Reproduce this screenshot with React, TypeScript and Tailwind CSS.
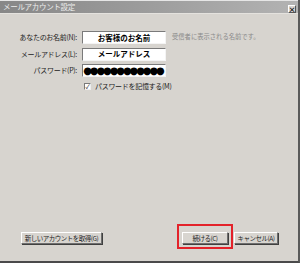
const jp = "font-['Noto_Sans_CJK_JP',sans-serif]";

function Field({ label, children, hint }: { label: string; children: React.ReactNode; hint?: string }) {
  return (
    <div className="flex items-center h-[13px]">
      <div className="w-[77px] text-right text-[7px] leading-none text-[#222] tracking-[-0.3px]">{label}</div>
      <div className="ml-[5px] w-[84px] h-[13px] bg-white border border-t-[#7a7a7a] border-l-[#7a7a7a] border-r-[#f4f4f4] border-b-[#f4f4f4] flex items-center justify-center text-[7.5px] font-bold leading-none text-black overflow-hidden">
        {children}
      </div>
      {hint && <div className="ml-[6px] text-[6.3px] leading-none text-[#8a8a8a] whitespace-nowrap">{hint}</div>}
    </div>
  );
}

function Btn({ label, w }: { label: string; w: string }) {
  return (
    <button
      className={`${w} h-[12px] bg-[#d8d5d0] border border-t-white border-l-white border-r-[#6e6e6e] border-b-[#6e6e6e] shadow-[1px_1px_0_#404040] text-[6.5px] leading-none text-[#222] tracking-[-0.5px] flex items-center justify-center whitespace-nowrap`}
    >
      {label}
    </button>
  );
}

export default function App() {
  return (
    <div className={`${jp} w-[300px] h-[263px] bg-[#d7d4cf] flex flex-col border-r-2 border-b-2 border-r-[#5a5a5a] border-b-[#4a4a4a] overflow-hidden`}>
      <div className="h-[1px] bg-[#e6e6e6]" />
      <div className="h-[12px] bg-gradient-to-r from-[#878787] to-[#b3b3b3] flex items-center justify-between pl-[3px] pr-[2px]">
        <span className="text-[7.5px] leading-none text-[#ececec] tracking-[-0.3px]">メールアカウント設定</span>
        <span className="w-[8px] h-[8px] mt-[4px] bg-[#d8d5d0] border border-t-white border-l-white border-r-[#555] border-b-[#555] flex items-center justify-center text-[7px] leading-none font-bold text-black">×</span>
      </div>
      <div className="h-[1px] bg-[#e4e2de]" />
      <div className="flex-1 flex flex-col pt-[17px]">
        <div className="flex flex-col gap-[3.5px]">
          <Field label="あなたのお名前(N):" hint="受信者に表示される名前です。">お客様のお名前</Field>
          <Field label="メールアドレス(L):">メールアドレス</Field>
          <Field label="パスワード(P):">
            <span className="font-['DejaVu_Sans',sans-serif] text-[10px] tracking-[-2.1px] font-normal pr-[2px]">●●●●●●●●●●●●</span>
          </Field>
        </div>
        <div className="flex items-center mt-[6px] ml-[84px]">
          <span className="w-[7px] h-[7px] bg-white border border-t-[#7a7a7a] border-l-[#7a7a7a] border-r-[#eee] border-b-[#eee] flex items-center justify-center text-[6px] leading-none text-black">✓</span>
          <span className="ml-[4px] text-[7px] leading-none text-[#222] tracking-[-0.3px]">パスワードを記憶する(M)</span>
        </div>
        <div className="mt-auto mb-[17px] flex justify-between pl-[21px] pr-[20px]">
          <Btn label="新しいアカウントを取得(G)" w="w-[81px]" />
          <div className="flex gap-[6px]">
            <div className="relative">
              <Btn label="続ける(C)" w="w-[46px]" />
              <div className="absolute -left-[5px] -right-[5px] -top-[8px] -bottom-[5px] border-2 border-[#e3222a]" />
            </div>
            <Btn label="キャンセル(A)" w="w-[44px]" />
          </div>
        </div>
      </div>
    </div>
  );
}
